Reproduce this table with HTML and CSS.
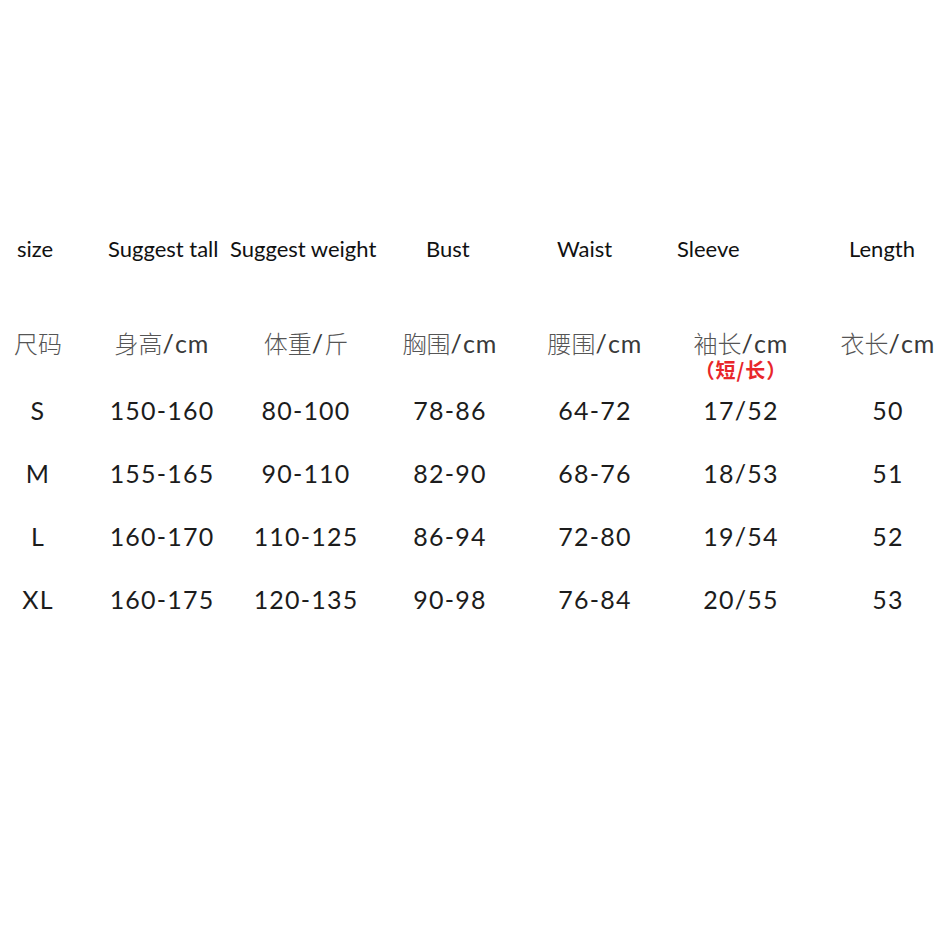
FILE: index.html
```html
<!DOCTYPE html>
<html lang="zh">
<head>
<meta charset="utf-8">
<title>Size chart</title>
<link rel="stylesheet" href="styles.css">
</head>
<body>
<main class="chart">
  <div class="head-row">
    <div class="hcell">size</div>
    <div class="hcell">Suggest tall</div>
    <div class="hcell">Suggest weight</div>
    <div class="hcell">Bust</div>
    <div class="hcell">Waist</div>
    <div class="hcell">Sleeve</div>
    <div class="hcell">Length</div>
  </div>
  <div class="grid">
    <div class="zh"><span class="zh-main">尺码</span></div>
    <div class="zh"><span class="zh-main">身高<span class="lat">/cm</span></span></div>
    <div class="zh"><span class="zh-main">体重<span class="lat">/</span>斤</span></div>
    <div class="zh"><span class="zh-main">胸围<span class="lat">/cm</span></span></div>
    <div class="zh"><span class="zh-main">腰围<span class="lat">/cm</span></span></div>
    <div class="zh"><span class="zh-main">袖长<span class="lat">/cm</span></span><span class="zh-sub">（短/长）</span></div>
    <div class="zh"><span class="zh-main">衣长<span class="lat">/cm</span></span></div>

    <div class="num">S</div><div class="num">150-160</div><div class="num">80-100</div><div class="num">78-86</div><div class="num">64-72</div><div class="num">17/52</div><div class="num">50</div>
    <div class="num">M</div><div class="num">155-165</div><div class="num">90-110</div><div class="num">82-90</div><div class="num">68-76</div><div class="num">18/53</div><div class="num">51</div>
    <div class="num">L</div><div class="num">160-170</div><div class="num">110-125</div><div class="num">86-94</div><div class="num">72-80</div><div class="num">19/54</div><div class="num">52</div>
    <div class="num">XL</div><div class="num">160-175</div><div class="num">120-135</div><div class="num">90-98</div><div class="num">76-84</div><div class="num">20/55</div><div class="num">53</div>
  </div>
</main>
</body>
</html>
```
FILE: styles.css
```css
html, body {
  margin: 0;
  padding: 0;
  background: #ffffff;
}

.chart {
  width: 950px;
  height: 950px;
  padding-top: 233px;
  box-sizing: border-box;
}

.head-row {
  display: grid;
  grid-template-columns: 91px 122px 196px 131px 120px 172px auto;
  padding-left: 17px;
  height: 32px;
  font-family: "Lato", "Open Sans", sans-serif;
  font-size: 22px;
  line-height: 32px;
  color: #111111;
  white-space: nowrap;
}

.grid {
  display: grid;
  grid-template-columns: 76px 172px 116px 172px 118px 174px 120px;
  grid-template-rows: 66px repeat(4, 63px);
  margin-top: 47px;
}

.zh {
  display: flex;
  flex-direction: column;
  align-items: center;
  padding-top: 16px;
  white-space: nowrap;
}

.zh-main {
  font-family: "Noto Sans CJK SC", sans-serif;
  font-weight: 300;
  font-size: 24px;
  line-height: 30px;
  color: #555555;
}

.lat {
  font-family: "Lato", sans-serif;
  font-weight: 400;
  font-size: 25px;
  color: #3a3a3a;
  letter-spacing: 1px;
}

.zh-sub {
  font-family: "Noto Sans CJK SC", sans-serif;
  font-weight: 700;
  font-size: 20px;
  line-height: 20px;
  margin-top: 2px;
  color: #e8262a;
  letter-spacing: 1px;
}

.num {
  display: flex;
  align-items: center;
  justify-content: center;
  font-family: "Lato", sans-serif;
  font-size: 25px;
  letter-spacing: 1.2px;
  color: #1c1c1c;
  white-space: nowrap;
}
```
